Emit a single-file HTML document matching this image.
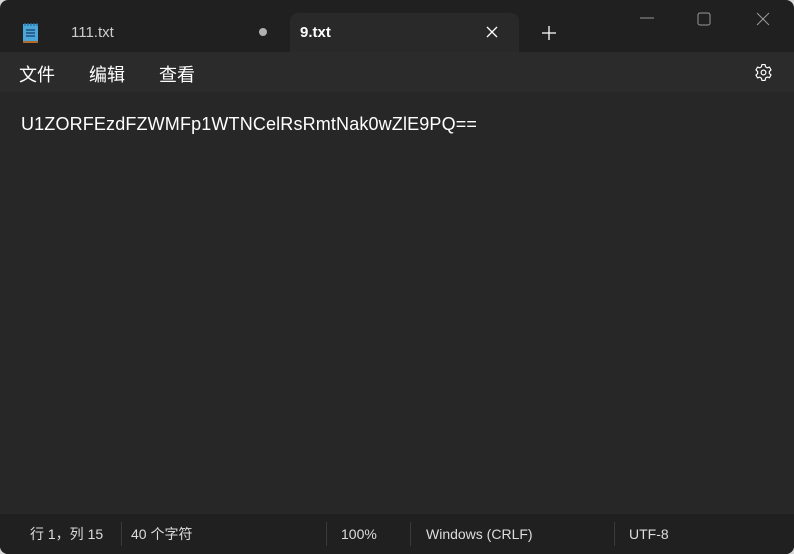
<!DOCTYPE html>
<html><head><meta charset="utf-8"><style>
*{margin:0;padding:0;box-sizing:border-box}
body{width:794px;height:554px;background:#d8d8d8;overflow:hidden;font-family:"Segoe UI","Liberation Sans","Noto Sans CJK SC",sans-serif;position:relative}
.win{position:absolute;left:0;top:0;width:794px;height:554px;background:#202020;border-radius:8px;overflow:hidden}
.tab{position:absolute;left:290px;top:13px;width:229px;height:40px;background:#292929;border-radius:8px 8px 0 0}
.menu{position:absolute;left:0;top:52px;width:794px;height:40px;background:#2b2b2b}
.edit{position:absolute;left:0;top:92px;width:794px;height:422px;background:#272727}
.status{position:absolute;left:0;top:514px;width:794px;height:40px;background:#202020}
.t{position:absolute;color:#fff;white-space:nowrap}
.sep{position:absolute;top:522px;width:1px;height:24px;background:#3a3a3a}
</style></head><body><div class="win">
<div class="tab"></div>
<svg class="t" style="left:22px;top:22px" width="17" height="21" viewBox="0 0 17 21"><rect x="1" y="2" width="15" height="18" fill="#4aa6d8"/><rect x="1" y="19" width="15" height="2" fill="#b06a2a"/><path d="M3 1v3M6 1v3M9 1v3M12 1v3M15 1v3" stroke="#2a6fa0" stroke-width="1.2"/><path d="M4 8h9M4 11h9M4 14h9" stroke="#1e4f7a" stroke-width="1.5"/></svg>
<div class="t" style="left:71px;top:24px;font-size:15px;color:#ccc">111.txt</div>
<div class="t" style="left:259px;top:28px;width:8px;height:8px;border-radius:50%;background:#b0b0b0"></div>
<div class="t" style="left:300px;top:24px;font-size:15px;font-weight:bold">9.txt</div>
<svg class="t" style="left:486px;top:26px" width="12" height="12"><path d="M1 1L11 11M11 1L1 11" stroke="#fff" stroke-width="1.3"/></svg>
<svg class="t" style="left:542px;top:26px" width="14" height="14"><path d="M7 0v14M0 7h14" stroke="#fff" stroke-width="1.3"/></svg>
<svg class="t" style="left:640px;top:17px" width="14" height="2"><path d="M0 1h14" stroke="#999" stroke-width="1"/></svg>
<svg class="t" style="left:697px;top:12px" width="14" height="14"><rect x="1" y="1" width="12" height="12" rx="2" fill="none" stroke="#999" stroke-width="1"/></svg>
<svg class="t" style="left:756px;top:12px" width="14" height="14"><path d="M1 1L13 13M13 1L1 13" stroke="#999" stroke-width="1"/></svg>
<div class="menu"></div>
<div class="t" style="left:19px;top:62px;font-size:18px;font-family:'Noto Sans CJK SC',sans-serif;line-height:24px">文件</div>
<div class="t" style="left:89px;top:62px;font-size:18px;font-family:'Noto Sans CJK SC',sans-serif;line-height:24px">编辑</div>
<div class="t" style="left:159px;top:62px;font-size:18px;font-family:'Noto Sans CJK SC',sans-serif;line-height:24px">查看</div>
<svg class="t" style="left:754px;top:63px" width="19" height="19" viewBox="0 0 24 24"><path d="M10 2h4l.6 2.8 2.2 1.3 2.7-.9 2 3.5-2.1 1.9v2.6l2.1 1.9-2 3.5-2.7-.9-2.2 1.3L14 22h-4l-.6-2.8-2.2-1.3-2.7.9-2-3.5 2.1-1.9v-2.6L2.5 8.7l2-3.5 2.7.9 2.2-1.3z" fill="none" stroke="#fff" stroke-width="1.5" stroke-linejoin="round"/><circle cx="12" cy="12" r="3" fill="none" stroke="#fff" stroke-width="1.5"/></svg>
<div class="edit"></div>
<div class="t" style="left:21px;top:114px;font-size:18px;letter-spacing:0.15px">U1ZORFEzdFZWMFp1WTNCelRsRmtNak0wZlE9PQ==</div>
<div class="status"></div>
<div class="t" style="left:30px;top:524px;font-size:14px;color:#ddd;font-family:'Liberation Sans','Noto Sans CJK SC',sans-serif">行 1，列 15</div>
<div class="sep" style="left:121px"></div>
<div class="t" style="left:131px;top:524px;font-size:14px;color:#ddd;font-family:'Liberation Sans','Noto Sans CJK SC',sans-serif">40 个字符</div>
<div class="sep" style="left:326px"></div>
<div class="t" style="left:341px;top:526px;font-size:14px;color:#ddd">100%</div>
<div class="sep" style="left:410px"></div>
<div class="t" style="left:426px;top:526px;font-size:14px;color:#ddd">Windows (CRLF)</div>
<div class="sep" style="left:614px"></div>
<div class="t" style="left:629px;top:526px;font-size:14px;color:#ddd">UTF-8</div>
</div></body></html>
